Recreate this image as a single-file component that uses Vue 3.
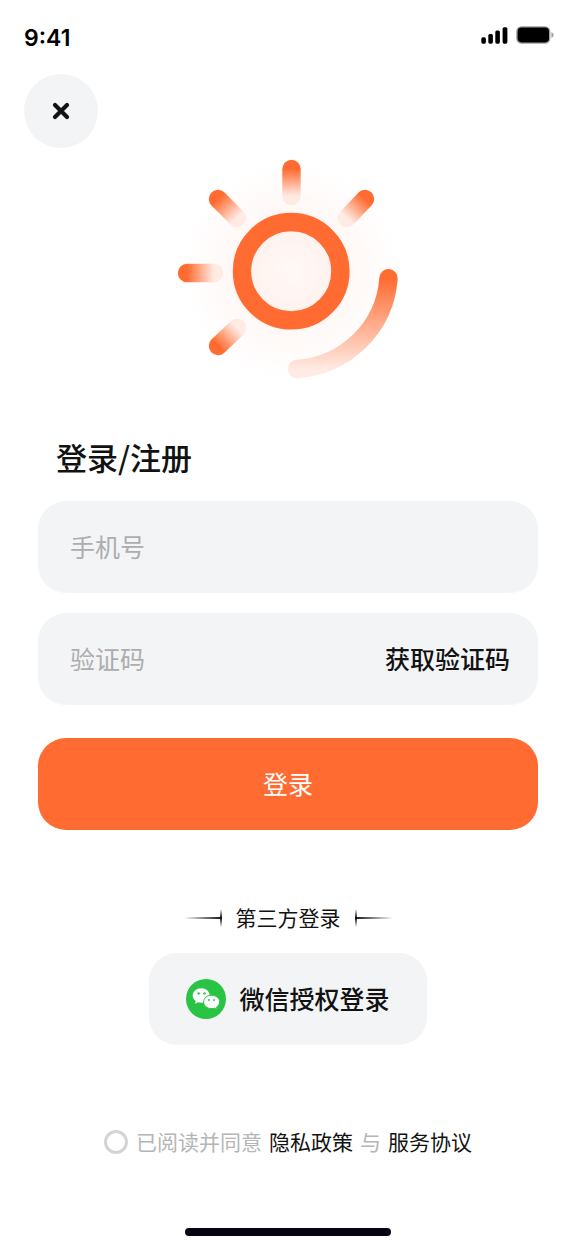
<script setup>
import { ref } from 'vue'

const phone = ref('')
const code = ref('')
const agreed = ref(false)

const rays = [
  { id: 'top', x1: 131.5, y1: 19, x2: 131.5, y2: 46 },
  { id: 'top-right', x1: 205, y1: 49, x2: 187, y2: 68 },
  { id: 'top-left', x1: 58, y1: 49, x2: 77, y2: 68 },
  { id: 'left', x1: 27, y1: 123, x2: 54, y2: 123 },
  { id: 'bottom-left', x1: 58, y1: 196, x2: 77, y2: 178 },
]

// A capsule drawn from the outer to the inner end of a ray
function capsule(ray) {
  const dx = ray.x2 - ray.x1
  const dy = ray.y2 - ray.y1
  const len = Math.hypot(dx, dy)
  const r = 9.2
  const nx = (-dy / len) * r
  const ny = (dx / len) * r
  return [
    `M${ray.x1 + nx} ${ray.y1 + ny}`,
    `A${r} ${r} 0 0 1 ${ray.x1 - nx} ${ray.y1 - ny}`,
    `L${ray.x2 - nx} ${ray.y2 - ny}`,
    `A${r} ${r} 0 0 1 ${ray.x2 + nx} ${ray.y2 + ny}Z`,
  ].join('')
}
</script>

<template>
  <main class="screen">
    <header class="status">
      <time class="clock">9:41</time>
      <div class="indicators">
        <svg class="signal" viewBox="0 0 27 17" aria-hidden="true">
          <rect x="0.3" y="10.3" width="4.6" height="6.4" rx="1.6" />
          <rect x="7.3" y="7" width="4.6" height="9.7" rx="1.6" />
          <rect x="14.3" y="3.4" width="4.6" height="13.3" rx="1.6" />
          <rect x="21.6" y="0.2" width="4.8" height="16.5" rx="1.6" />
        </svg>
        <svg class="battery" viewBox="0 0 38 18" aria-hidden="true">
          <rect x="0.8" y="0.8" width="33" height="16.4" rx="4.6" fill="#a3a3a3" stroke="#a3a3a3" stroke-width="1.2" />
          <rect x="1.6" y="1.6" width="31.4" height="14.8" rx="3.8" />
          <path d="M35.4 6.2c1.5.5 2.3 1.6 2.3 2.8s-.8 2.3-2.3 2.8z" fill="#a3a3a3" />
        </svg>
      </div>
    </header>

    <button class="close" type="button" aria-label="关闭">
      <svg viewBox="0 0 18 18" aria-hidden="true">
        <path d="M3 3l12 12M15 3L3 15" fill="none" stroke="#121212" stroke-width="4.2" stroke-linecap="round" />
      </svg>
    </button>

    <svg class="sun" viewBox="18 10 220 218" aria-hidden="true">
      <defs>
        <radialGradient id="glow">
          <stop offset="0" stop-color="#fff9f7" />
          <stop offset="0.38" stop-color="#fff2ee" />
          <stop offset="0.6" stop-color="#fff9f7" />
          <stop offset="1" stop-color="#ffffff" />
        </radialGradient>
        <linearGradient
          v-for="ray in rays"
          :id="`fade-${ray.id}`"
          :key="ray.id"
          gradientUnits="userSpaceOnUse"
          :x1="ray.x1"
          :y1="ray.y1"
          :x2="ray.x2"
          :y2="ray.y2"
        >
          <stop offset="0" stop-color="#ff6b30" />
          <stop offset="1" stop-color="#ffebe4" />
        </linearGradient>
        <linearGradient id="fade-arc" gradientUnits="userSpaceOnUse" x1="0" y1="128" x2="0" y2="220">
          <stop offset="0" stop-color="#ff6b30" />
          <stop offset="1" stop-color="#ffebe4" />
        </linearGradient>
      </defs>
      <circle cx="131" cy="121" r="108" fill="url(#glow)" />
      <path v-for="ray in rays" :key="ray.id" :d="capsule(ray)" :fill="`url(#fade-${ray.id})`" />
      <circle cx="131.2" cy="121.2" r="49.2" fill="none" stroke="#ff6b30" stroke-width="18.4" />
      <path
        d="M228.5 128.3A98 98 0 0 1 137 219"
        fill="none"
        stroke="url(#fade-arc)"
        stroke-width="18.4"
        stroke-linecap="round"
      />
    </svg>

    <form class="form" @submit.prevent>
      <h1 class="title">登录/注册</h1>
      <div class="field">
        <input v-model="phone" type="tel" placeholder="手机号" aria-label="手机号" />
      </div>
      <div class="field">
        <input v-model="code" type="text" placeholder="验证码" aria-label="验证码" />
        <button class="get-code" type="button">获取验证码</button>
      </div>
      <button class="submit" type="submit">登录</button>
    </form>

    <section class="third-party">
      <div class="divider">
        <span class="rule left"></span>
        <h2>第三方登录</h2>
        <span class="rule right"></span>
      </div>
      <button class="wechat" type="button">
        <svg viewBox="-20 -20 40 40" aria-hidden="true">
          <circle r="20" fill="#2ac445" />
          <path
            d="M-4.8-10.8C-9.6-10.8-13.3-7.6-13.3-3.6c0 2.3 1.2 4.3 3.1 5.7l-.8 2.600 3.100-1.500c1 .3 2 .5 3.100.5 4.800 0 8.500-3.300 8.500-7.300s-3.700-7.200-8.500-7.200z"
            fill="#fff"
          />
          <path
            d="M5.600-3.800c-4.500 0-8 3-8 6.700s3.500 6.700 8 6.700c1 0 2-.2 2.900-.4l2.600 1.300-.6-2.300c1.900-1.300 3.100-3.100 3.100-5.300 0-3.700-3.500-6.700-8-6.700z"
            fill="#fff"
            stroke="#2ac445"
            stroke-width="1"
          />
          <g fill="#2ac445">
            <circle cx="-7.4" cy="-5.6" r="1.2" />
            <circle cx="-1.5" cy="-5.6" r="1.2" />
            <circle cx="3" cy="1" r="1" />
            <circle cx="8" cy="1" r="1" />
          </g>
        </svg>
        <span>微信授权登录</span>
      </button>
    </section>

    <footer class="agreement">
      <label>
        <input v-model="agreed" type="checkbox" />
        <span>已阅读并同意</span>
      </label>
      <a href="#privacy">隐私政策</a>
      <span>与</span>
      <a href="#terms">服务协议</a>
    </footer>

    <div class="home-bar"></div>
  </main>
</template>

<style>
body {
  margin: 0;
  background: #fff;
}
</style>

<style scoped>
.screen {
  display: flex;
  flex-direction: column;
  box-sizing: border-box;
  min-height: 100vh;
  padding: 24px 24px 12px;
  color: #121212;
  font-family: "Noto Sans CJK SC", "Noto Sans", sans-serif;
}

button,
input {
  margin: 0;
  padding: 0;
  border: 0;
  background: none;
  color: inherit;
  font: inherit;
}

button {
  cursor: pointer;
}

.status {
  display: flex;
  justify-content: space-between;
  align-items: flex-start;
  height: 50px;
}

.clock {
  color: #000;
  font: 600 23px/28px Inter, sans-serif;
}

.indicators {
  display: flex;
  align-items: center;
  gap: 8px;
  margin-right: -2px;
  padding-top: 2px;
}

.signal {
  width: 27px;
  height: 17px;
}

.battery {
  width: 38px;
  height: 18px;
}

.close {
  display: grid;
  place-items: center;
  width: 74px;
  height: 74px;
  border-radius: 50%;
  background: #f3f4f6;
}

.close svg {
  width: 18px;
  height: 18px;
}

.sun {
  align-self: center;
  width: 220px;
  height: 218px;
  margin-top: 12px;
  overflow: visible;
}

.form {
  display: flex;
  flex-direction: column;
  margin: 56px 14px 0;
}

.title {
  margin: 0 0 22px 18px;
  font-size: 31px;
  font-weight: 500;
  line-height: 45px;
}

.field {
  display: flex;
  align-items: center;
  box-sizing: border-box;
  height: 92px;
  margin-bottom: 20px;
  padding: 0 28px 3px 32px;
  border-radius: 28px;
  background: #f3f4f6;
  font-size: 25px;
}

.field input {
  flex: 1;
  min-width: 0;
  height: 48px;
  outline: none;
}

.field input::placeholder {
  color: #adadad;
  opacity: 1;
}

.get-code {
  font-weight: 500;
}

.submit {
  height: 92px;
  margin-top: 13px;
  padding-bottom: 3px;
  border-radius: 28px;
  background: #ff6b30;
  color: #fff;
  font-size: 25px;
}

.third-party {
  display: flex;
  flex-direction: column;
  align-items: center;
  margin-top: 72px;
}

.divider {
  display: flex;
  align-items: center;
  gap: 14px;
}

.divider h2 {
  margin: 0;
  padding-bottom: 2px;
  font-size: 21px;
  font-weight: 400;
  line-height: 30px;
}

.rule {
  width: 38px;
  height: 18px;
  background-repeat: no-repeat;
}

.rule.left {
  background-image: linear-gradient(to right, transparent, #121212), linear-gradient(transparent, #121212, transparent);
  background-position: center, right;
  background-size: 100% 2px, 2px 100%;
}

.rule.right {
  background-image: linear-gradient(to left, transparent, #121212), linear-gradient(transparent, #121212, transparent);
  background-position: center, left;
  background-size: 100% 2px, 2px 100%;
}

.wechat {
  display: flex;
  align-items: center;
  gap: 13px;
  height: 92px;
  margin-top: 19px;
  padding: 0 37px;
  border-radius: 28px;
  background: #f3f4f6;
  font-size: 25px;
  font-weight: 500;
}

.wechat svg {
  width: 40px;
  height: 40px;
}

.wechat span {
  padding-bottom: 3px;
}

.agreement {
  display: flex;
  justify-content: center;
  align-items: center;
  gap: 7px;
  margin-top: 80px;
  color: #b5b5b5;
  font-size: 21px;
  line-height: 32px;
}

.agreement span,
.agreement a {
  padding-bottom: 2px;
}

.agreement label {
  display: flex;
  align-items: center;
  gap: 8px;
}

.agreement input {
  box-sizing: border-box;
  width: 24px;
  height: 24px;
  border: 3px solid #d4d4d4;
  border-radius: 50%;
  appearance: none;
}

.agreement input:checked {
  border: 7px solid #ff6b30;
}

.agreement a {
  color: #121212;
  text-decoration: none;
}

.home-bar {
  align-self: center;
  width: 206px;
  height: 8px;
  margin-top: auto;
  border-radius: 4px;
  background: #080412;
}
</style>
